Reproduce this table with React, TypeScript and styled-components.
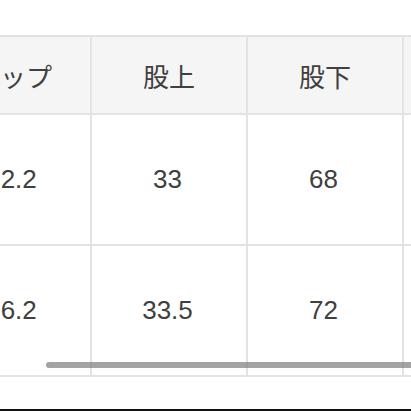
import { useLayoutEffect, useRef } from 'react';
import styled, { createGlobalStyle } from 'styled-components';

/* サイズ表 (横スクロール) */
const columns = ['サイズ', 'ウエスト', 'ヒップ', '股上', '股下', '裾幅'];
const rows = [
  ['S', '68', '92.2', '33', '68', '17'],
  ['M', '72', '96.2', '33.5', '72', '18'],
];

const App = () => {
  const scrollRef = useRef<HTMLDivElement>(null);

  useLayoutEffect(() => {
    // ヒップ列の途中までスクロールした状態
    if (scrollRef.current) scrollRef.current.scrollLeft = 378;
  }, []);

  return (
    <Page>
      <GlobalStyle />
      <TableArea>
        <Scroller ref={scrollRef}>
          <Grid $cols={columns.length}>
            {columns.map((c) => (
              <HeadCell key={c}>{c}</HeadCell>
            ))}
            {rows.map((r, i) =>
              r.map((v, j) => <Cell key={`${i}-${j}`}>{v}</Cell>)
            )}
          </Grid>
        </Scroller>
        <Thumb />
      </TableArea>
    </Page>
  );
};

const GlobalStyle = createGlobalStyle`
  html, body {
    margin: 0;
    padding: 0;
    background: #fff;
  }
  body {
    font-family: "Liberation Sans", "Noto Sans CJK JP", sans-serif;
    color: #404040;
  }
`;

const Page = styled.div`
  width: 411px;
  height: 411px;
  box-sizing: border-box;
  padding-top: 35px;
  border-bottom: 2px solid #111;
  overflow: hidden;
`;

const TableArea = styled.div`
  position: relative;
`;

const Scroller = styled.div`
  width: 100%;
  overflow-x: auto;
  scrollbar-width: none;
  &::-webkit-scrollbar {
    display: none;
  }
`;

const Grid = styled.div<{ $cols: number }>`
  display: grid;
  grid-template-columns: repeat(${(p) => p.$cols}, 154px);
  grid-template-rows: 76px 129px 129px;
  gap: 2px;
  padding: 2px;
  width: max-content;
  background: #e3e3e3;
`;

const HeadCell = styled.div`
  display: flex;
  align-items: center;
  justify-content: center;
  background: #f5f5f5;
  font-size: 26px;
`;

const Cell = styled.div`
  display: flex;
  align-items: center;
  justify-content: center;
  padding-right: 3px;
  background: #fff;
  font-size: 26px;
`;

const Thumb = styled.div`
  position: absolute;
  left: 46px;
  right: -10px;
  top: 327px;
  height: 6px;
  border-radius: 3px;
  background: rgba(128, 128, 128, 0.72);
`;

export default App;
